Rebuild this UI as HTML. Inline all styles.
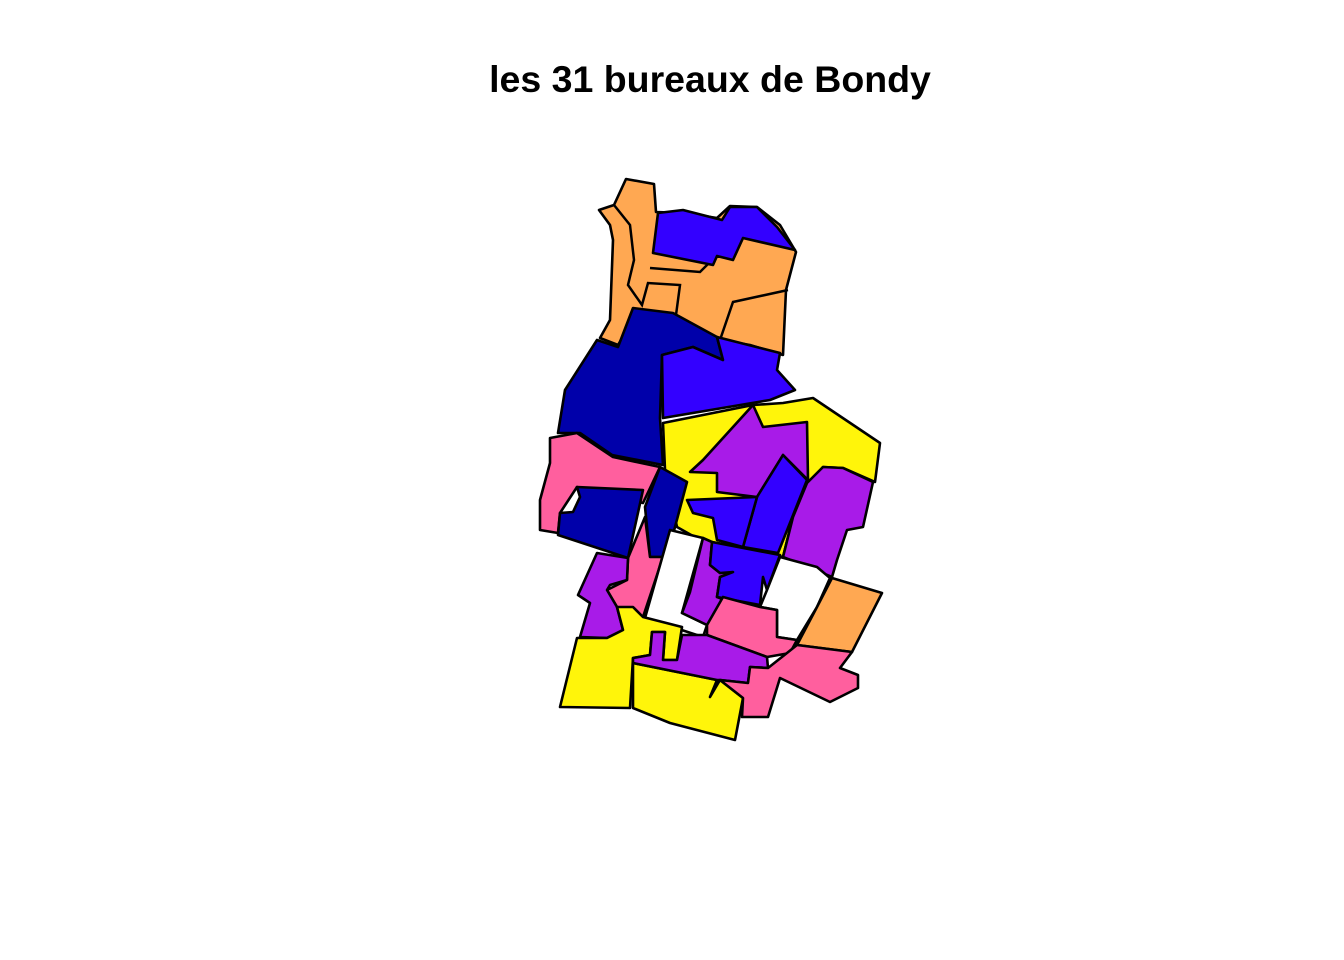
<!DOCTYPE html>
<html><head><style>
html,body{margin:0;padding:0;background:#fff;}
body{width:1344px;height:960px;position:relative;overflow:hidden;}
h1{position:absolute;left:0;width:1420px;top:58px;margin:0;text-align:center;font:bold 37.5px "Liberation Sans",sans-serif;color:#000;}
svg{position:absolute;left:0;top:0;}
polygon{stroke:#000;stroke-width:2.6;stroke-linejoin:round;}
.o{fill:#FFA852}.b{fill:#3300FF}.n{fill:#0000AA}.y{fill:#FFF50A}.p{fill:#A81BE8}.k{fill:#FF5F9E}.w{fill:#fff}
</style></head><body>
<h1>les 31 bureaux de Bondy</h1>
<svg width="1344" height="960">
<polygon class="o" points="599,210 614,205 626,179 654,184 656,212 685,213 717,218 730,206 757,207 780,225 796,252 786,290 783,355 750,345 720,340 672,314 640,310 618,345 600,338 610,320 613,240 610,225"/>
<polyline points="614,205 630,225 634,260 628,285 642,305 648,283 680,285 676,315" fill="none" stroke="#000" stroke-width="2.5"/>
<polyline points="650,268 700,272 707,265 717,256" fill="none" stroke="#000" stroke-width="2.5"/>
<polyline points="720,340 733,302 788,290" fill="none" stroke="#000" stroke-width="2.5"/>
<polygon class="b" points="658,213 683,210 722,220 730,207 757,207 777,227 795,250 743,238 733,260 717,256 713,265 653,253"/>
<polygon class="y" points="663,423 753,405 783,403 813,398 880,443 875,482 843,468 823,467 808,485 793,517 783,557 745,548 700,540 677,527 665,470"/>
<polygon class="n" points="633,308 673,313 717,337 723,360 693,347 662,355 660,418 663,465 612,455 580,433 558,433 565,390 597,340 618,347"/>
<polygon class="b" points="662,355 693,347 723,360 717,337 780,353 777,370 795,390 770,400 663,418"/>
<polygon class="p" points="703,460 753,405 763,427 807,422 808,480 783,455 757,497 717,492 717,473 690,472"/>
<polygon class="b" points="783,455 807,480 778,553 743,547 757,497"/>
<polygon class="b" points="687,500 757,497 743,547 717,540 713,518 693,513"/>
<polygon class="p" points="807,483 823,467 843,468 873,482 863,527 847,530 837,560 832,577 783,557 793,517"/>
<polygon class="k" points="550,438 577,433 613,457 660,467 643,503 577,487 560,513 558,533 540,530 540,500 550,463"/>
<polygon class="n" points="577,487 643,490 628,558 558,535 560,513 573,512 580,497"/>
<polygon class="n" points="660,467 687,482 667,557 650,557 645,507"/>
<polygon class="k" points="628,558 645,517 650,557 663,557 643,617 617,607 607,590 627,580"/>
<polygon class="p" points="597,553 628,558 627,580 610,585 607,590 617,607 623,630 607,638 580,637 590,603 578,595"/>
<polygon class="w" points="670,530 703,538 682,613 707,625 703,637 645,618"/>
<polygon class="p" points="703,538 712,542 710,565 720,573 733,572 720,577 717,597 725,600 707,625 682,613 690,592"/>
<polygon class="b" points="712,542 780,555 767,590 763,577 760,605 717,597 720,577 733,572 720,573 710,565"/>
<polygon class="w" points="780,557 817,567 830,578 817,607 797,640 777,637 777,610 760,607 767,590"/>
<polygon class="o" points="832,578 882,593 852,652 797,645 817,607"/>
<polygon class="k" points="723,597 760,607 777,610 777,637 797,640 790,653 767,657 707,635 707,625"/>
<polygon class="y" points="577,638 607,638 623,630 617,607 633,607 643,617 682,627 677,660 663,660 665,632 652,632 650,655 633,658 630,708 560,707"/>
<polygon class="y" points="633,663 717,680 710,697 720,680 743,698 735,740 670,723 633,708"/>
<polygon class="p" points="633,658 650,655 652,632 665,632 663,660 677,660 682,635 707,635 767,657 768,668 750,667 748,683 720,680 717,680 633,663"/>
<polygon class="k" points="720,680 748,683 750,667 768,668 787,653 797,645 852,652 840,668 858,675 858,688 830,702 780,678 768,717 742,717 743,698"/>
</svg>
</body></html>
